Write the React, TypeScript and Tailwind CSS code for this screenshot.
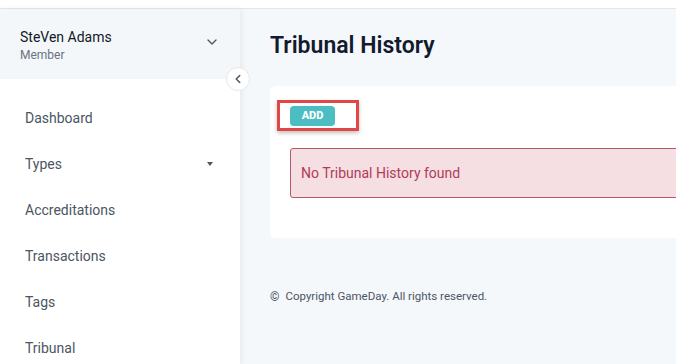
import { ChevronDown, ChevronLeft } from 'lucide-react';

const navItems = ['Dashboard', 'Types', 'Accreditations', 'Transactions', 'Tags', 'Tribunal'];

const Sidebar = () => {
  return (
    <aside className="relative w-[240px] shrink-0 bg-white shadow-[2px_0_6px_rgba(0,0,0,0.06)] z-10">
      <div className="h-[70px] bg-[#f4f7fa] flex items-center justify-between pl-[20px] pr-[20px]">
        <div className="flex flex-col pt-[2px]">
          <span className="text-[14px] leading-[20px] font-normal text-[#111827]">SteVen Adams</span>
          <span className="text-[12px] leading-[16px] text-[#6b7280]">Member</span>
        </div>
        <ChevronDown size={16} strokeWidth={2} className="text-[#4b5563] mb-[4px]" />
      </div>
      <button className="absolute right-[-10px] top-[58px] w-[24px] h-[24px] rounded-full bg-white border border-[#e5e7eb] flex items-center justify-center">
        <ChevronLeft size={14} strokeWidth={2.5} className="text-[#4b5563]" />
      </button>
      <nav className="pt-[16px]">
        {navItems.map((item) => (
          <div key={item} className="h-[46px] flex items-center justify-between pl-[25px] pr-[25px]">
            <span className="text-[14px] text-[#4b5563]">{item}</span>
            {item === 'Types' && (
              <span className="w-0 h-0 border-l-[3px] border-r-[3px] border-t-[4px] border-l-transparent border-r-transparent border-t-[#4b5563] mr-[2px]" />
            )}
          </div>
        ))}
      </nav>
    </aside>
  );
};

export default function App() {
  return (
    <div className="h-[364px] w-[676px] overflow-hidden flex flex-col bg-[#f5f8fb]" style={{ fontFamily: 'Roboto, "Noto Sans", sans-serif' }}>
      <div className="h-[9px] shrink-0 bg-white border-b border-[#e5e7eb]" />
      <div className="flex flex-1 min-h-0">
        <Sidebar />
        <main className="flex-1 min-w-0 overflow-hidden pl-[30px] pt-[23px]">
          <h1 className="text-[23px] leading-[28px] font-semibold text-[#141a2e]">Tribunal History</h1>
          <div className="mt-[26px] w-[460px] h-[152px] bg-white rounded-[6px] pt-[14px] pl-[7px]">
            <div className="w-[82px] h-[31px] border-[3px] border-[#e04848] shadow-[0_2px_4px_rgba(0,0,0,0.25)] flex items-center pl-[10px]">
              <button className="w-[45px] h-[20px] rounded-[4px] bg-[#4cbec3] text-white text-[11px] font-extrabold leading-none">ADD</button>
            </div>
            <div className="mt-[17px] ml-[13px] h-[50px] border border-[#b5576c] bg-[#f5dfe3] rounded-[3px] flex items-center pl-[10px]">
              <span className="text-[14px] text-[#b13b56]">No Tribunal History found</span>
            </div>
          </div>
          <div className="mt-[50px] flex items-center gap-[6px] text-[11.5px] text-[#4b5563]">
            <span className="text-[12px]">©</span>
            <span>Copyright GameDay. All rights reserved.</span>
          </div>
        </main>
      </div>
    </div>
  );
}
